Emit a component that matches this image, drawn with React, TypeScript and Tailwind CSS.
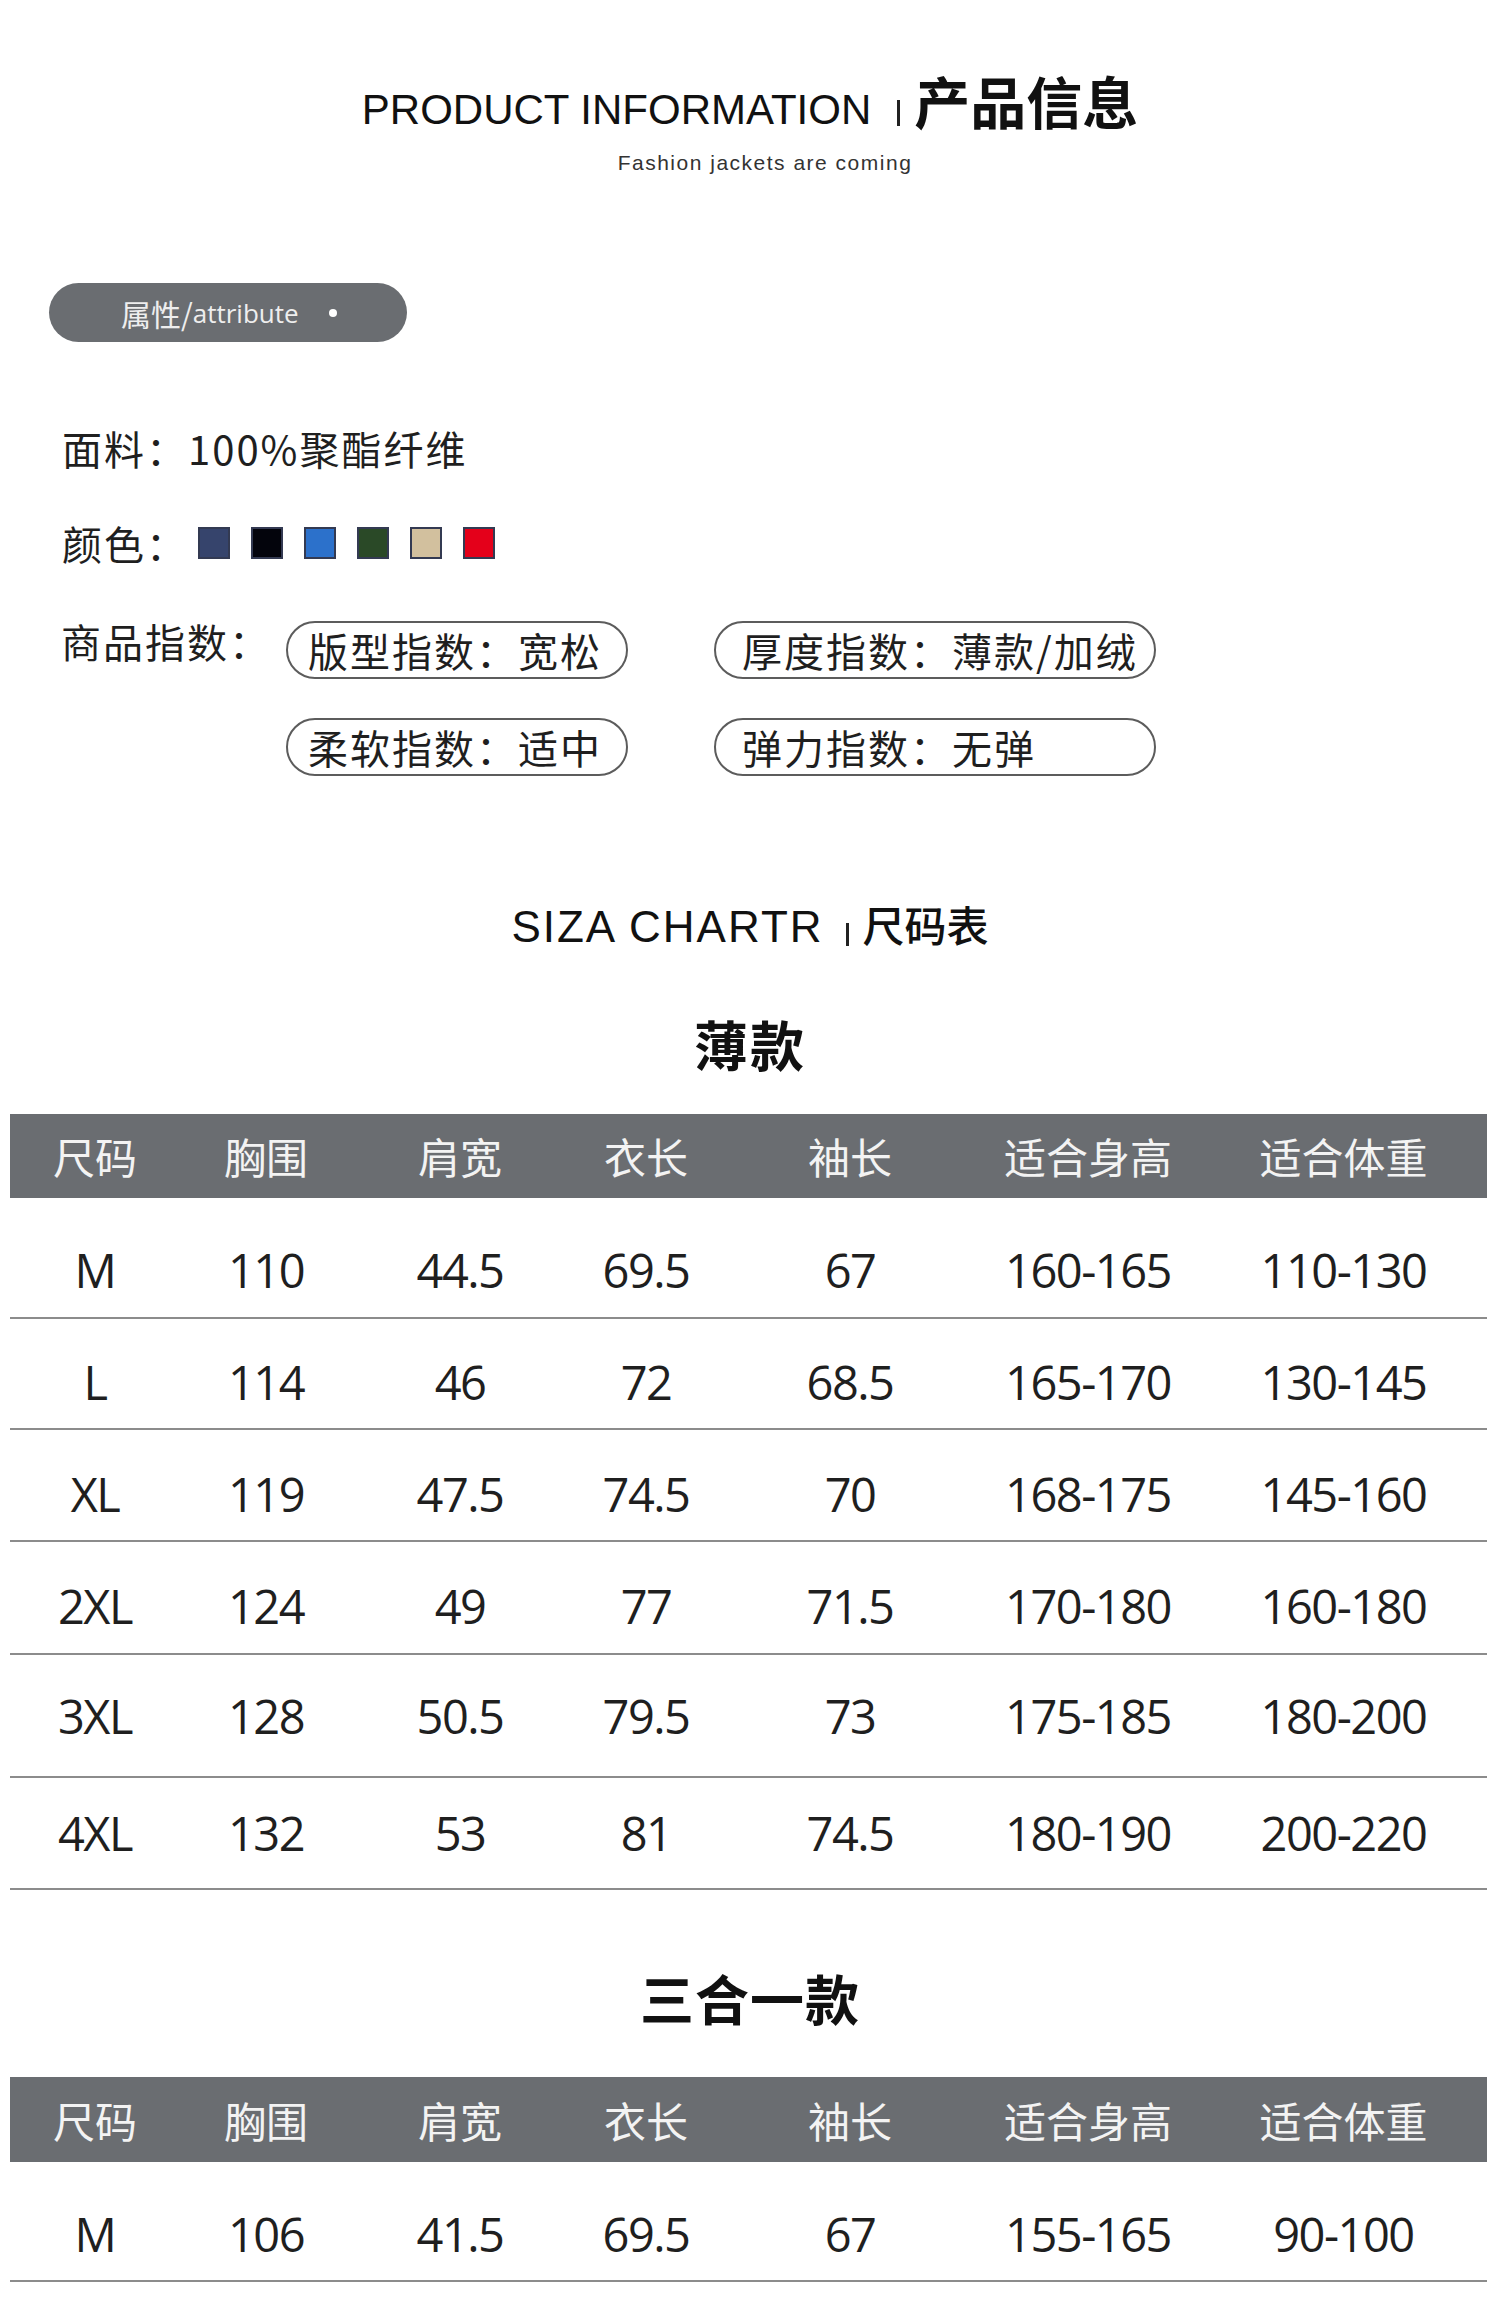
const cjk = "font-['Noto_Sans_CJK_SC',sans-serif]";
const latin = "font-['Liberation_Sans','Noto_Sans_CJK_SC',sans-serif]";
const nums = "font-['Open_Sans','Noto_Sans_CJK_SC',sans-serif]";

const cols = 'grid grid-cols-[170px_172px_216px_156px_252px_224px_287px]';

const headers = ['尺码', '胸围', '肩宽', '衣长', '袖长', '适合身高', '适合体重'];

const thinRows = [
  { h: 'h-[121px] pt-[26px]', cells: ['M', '110', '44.5', '69.5', '67', '160-165', '110-130'] },
  { h: 'h-[111px] pt-[18px]', cells: ['L', '114', '46', '72', '68.5', '165-170', '130-145'] },
  { h: 'h-[112px] pt-[18px]', cells: ['XL', '119', '47.5', '74.5', '70', '168-175', '145-160'] },
  { h: 'h-[113px] pt-[18px]', cells: ['2XL', '124', '49', '77', '71.5', '170-180', '160-180'] },
  { h: 'h-[123px] pt-[2px]', cells: ['3XL', '128', '50.5', '79.5', '73', '175-185', '180-200'] },
  { h: 'h-[112px] pt-0', cells: ['4XL', '132', '53', '81', '74.5', '180-190', '200-220'] },
];

const comboRows = [
  { h: 'h-[120px] pt-[26px]', cells: ['M', '106', '41.5', '69.5', '67', '155-165', '90-100'] },
];

const swatches = [
  'bg-[#36446c]',
  'bg-[#03040c]',
  'bg-[#2c71cb]',
  'bg-[#2a4927]',
  'bg-[#d2c09e]',
  'bg-[#e4001a]',
];

function SizeTable({ rows, headerH }: { rows: { h: string; cells: string[] }[]; headerH: string }) {
  return (
    <div className="ml-[10px] w-[1477px]">
      {/* header bar */}
      <div className={`${cols} ${headerH} items-center bg-[#6a6d71] ${cjk} text-[42px] leading-none text-[#f3f3f3]`}>
        {headers.map((t) => (
          <div key={t} className="flex justify-center">
            {t}
          </div>
        ))}
      </div>
      {rows.map((row) => (
        <div
          key={row.cells[0]}
          className={`${cols} ${row.h} items-center border-b-2 border-[#8c8c8c] ${nums} text-[47px] leading-none tracking-[-1.5px] text-[#1f1f1f]`}
        >
          {row.cells.map((c, i) => (
            <div key={i} className="flex justify-center">
              {c}
            </div>
          ))}
        </div>
      ))}
    </div>
  );
}

function Pill({ text, wide }: { text: string; wide?: boolean }) {
  return (
    <div
      className={`flex h-[58px] items-center rounded-full border-2 border-[#5c5c5c] ${
        wide ? 'pl-[26px]' : 'pl-[20px]'
      } text-[40px] leading-none tracking-[2px]`}
    >
      {text}
    </div>
  );
}

export default function App() {
  return (
    <div className={`h-[2322px] w-full overflow-hidden bg-white pt-[72px] ${cjk} text-[#1f1f1f]`}>
      {/* Title */}
      <div className="flex items-baseline justify-center">
        <span className={`${latin} text-[42px] leading-none text-[#111]`}>PRODUCT INFORMATION</span>
        <span className="ml-[26px] mr-[14px] inline-block h-[26px] w-[3px] translate-y-[2px] bg-[#222]" />
        <span className="text-[56px] font-bold leading-none text-[#111]">产品信息</span>
      </div>
      <div className="mt-[21px] flex justify-center pl-[30px]">
        <span className={`${latin} text-[21px] leading-none tracking-[1.5px] text-[#333]`}>Fashion jackets are coming</span>
      </div>

      {/* attribute badge */}
      <div className="ml-[49px] mt-[110px] flex h-[59px] w-[358px] items-center rounded-full bg-[#6a6d71] pl-[72px] text-[#eeeeee]">
        <span className="text-[30px] leading-none">属性/</span>
        <span className={`${nums} text-[26px] leading-none`}>attribute</span>
        <span className="ml-[30px] h-[8px] w-[8px] rounded-full bg-white" />
      </div>

      {/* attributes */}
      <div className="ml-[62px] mt-[86px] flex h-[40px] items-center text-[40px] leading-none tracking-[2px]">
        面料：100%聚酯纤维
      </div>
      <div className="ml-[62px] mt-[55px] flex h-[40px] items-center">
        <span className="text-[40px] leading-none tracking-[2px]">颜色：</span>
        <div className="ml-[10px] flex gap-[21px]">
          {swatches.map((s) => (
            <span key={s} className={`h-[32px] w-[32px] border-2 border-[#333a52] ${s}`} />
          ))}
        </div>
      </div>
      <div className="ml-[61px] mt-[58px] flex">
        <div className="w-[225px] text-[40px] leading-none tracking-[2px]">商品指数：</div>
        <div className="grid grid-cols-[342px_442px] gap-x-[86px] gap-y-[39px]">
          <Pill text="版型指数：宽松" />
          <Pill text="厚度指数：薄款/加绒" wide />
          <Pill text="柔软指数：适中" />
          <Pill text="弹力指数：无弹" wide />
        </div>
      </div>

      {/* size chart title */}
      <div className="mt-[127px] flex items-baseline justify-center">
        <span className={`${latin} text-[44px] leading-none tracking-[2px] text-[#111]`}>SIZA CHARTR</span>
        <span className="ml-[22px] mr-[14px] inline-block h-[23px] w-[3px] translate-y-[4px] bg-[#222]" />
        <span className="text-[42px] font-medium leading-none text-[#111]">尺码表</span>
      </div>

      <div className="mt-[68px] flex justify-center">
        <span className="text-[54px] font-bold leading-none tracking-[2px] text-[#111]">薄款</span>
      </div>
      <div className="mt-[43px]">
        <SizeTable rows={thinRows} headerH="h-[84px]" />
      </div>

      <div className="mt-[81px] flex justify-center">
        <span className="text-[54px] font-bold leading-none tracking-[1px] text-[#111]">三合一款</span>
      </div>
      <div className="mt-[52px]">
        <SizeTable rows={comboRows} headerH="h-[85px]" />
      </div>
    </div>
  );
}
